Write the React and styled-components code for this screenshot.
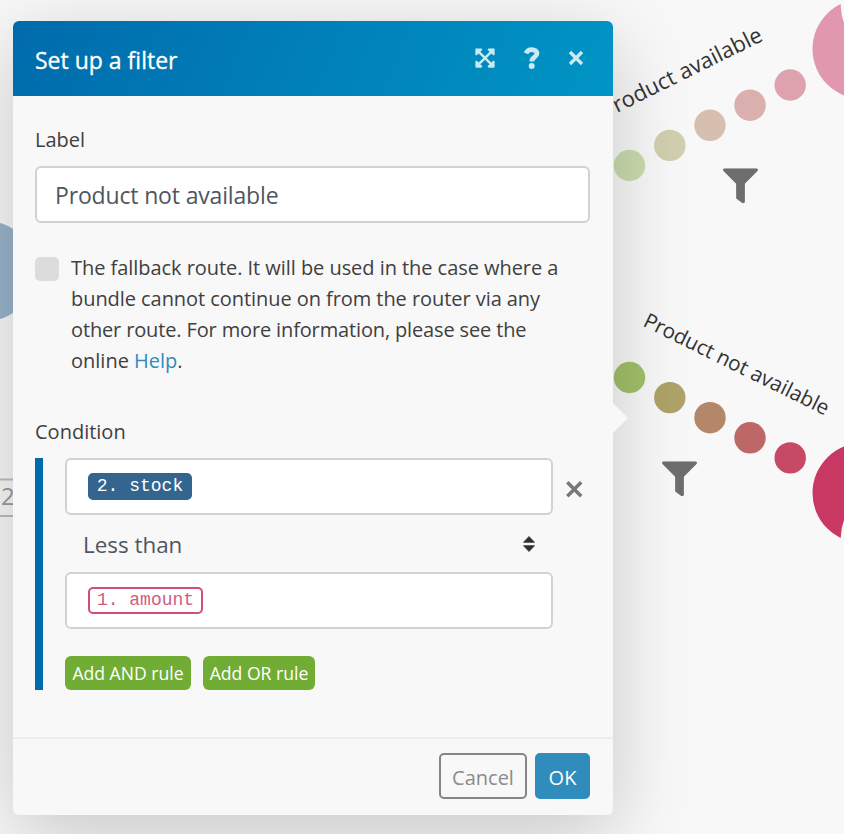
import React from "react";
import styled, { createGlobalStyle } from "styled-components";
import { FaExpandArrowsAlt } from "react-icons/fa";

const GlobalStyle = createGlobalStyle`
  * {
    box-sizing: border-box;
  }
  body {
    margin: 0;
    background: #f8f8f8;
    color: #404040;
    font-family: "Open Sans", "Noto Sans", sans-serif;
  }
`;

const Page = styled.main`
  position: relative;
  display: flow-root;
  width: 844px;
  height: 834px;
  overflow: hidden;
`;

const Canvas = styled.svg`
  position: absolute;
  inset: 0;
  width: 844px;
  height: 834px;
`;

const RouteLabel = styled.text`
  font-size: ${(p) => p.$size}px;
  fill: #333;
`;

const ModuleCount = styled.text`
  font-size: 24px;
  fill: #9a9a9a;
`;

const Dialog = styled.section`
  position: relative;
  display: flex;
  flex-direction: column;
  width: 600px;
  height: 794px;
  margin: 21px 0 0 13px;
  border-radius: 6px;
  background: #f8f8f8;
  box-shadow: 0 20px 80px rgba(0, 0, 0, 0.2);
`;

const Pointer = styled.span`
  position: absolute;
  top: 382px;
  left: 100%;
  width: 15px;
  height: 30px;
  background: #f8f8f8;
  clip-path: polygon(0 0, 100% 50%, 0 100%);
`;

const Header = styled.header`
  display: flex;
  align-items: center;
  justify-content: space-between;
  height: 75px;
  padding: 0 17px 0 22px;
  border-radius: 6px 6px 0 0;
  background: linear-gradient(115deg, #006bac, #0095c5);
`;

const Title = styled.h1`
  margin: 2px 0 0;
  color: #fff;
  font-size: 23px;
  font-weight: 400;
  line-height: 32px;
  -webkit-text-stroke: 0.3px #fff;
`;

const HeaderActions = styled.div`
  display: flex;
  align-items: center;
  padding-bottom: 1px;
`;

const IconButton = styled.button`
  display: flex;
  align-items: center;
  justify-content: center;
  width: ${(p) => p.$width}px;
  height: 30px;
  padding: 0;
  border: 0;
  background: none;
  color: #cce9f3;
`;

const RemoveButton = styled(IconButton)`
  padding: 5px 0 0 6px;
  color: #777;
`;

const Body = styled.div`
  display: flex;
  flex: 1;
  flex-direction: column;
  padding: 28px 23px 0 22px;
`;

const FieldLabel = styled.label`
  height: 30px;
  font-size: 20px;
  line-height: 31px;
`;

const TextInput = styled.div`
  display: flex;
  align-items: center;
  height: 57px;
  margin-top: 12px;
  padding: 0 18px;
  border: 2px solid #d2d2d2;
  border-radius: 6px;
  background: #fff;
  color: #4f5660;
  font-size: 23px;
  letter-spacing: -0.16px;
`;

const CheckRow = styled.div`
  display: flex;
  gap: 12px;
  margin: 29px 0 40px;
`;

const Checkbox = styled.span`
  flex: none;
  width: 24px;
  height: 24px;
  margin-top: 5px;
  border-radius: 5px;
  background: #dcdcdc;
`;

const Description = styled.p`
  margin: 0;
  font-size: 20px;
  line-height: 31px;
  white-space: nowrap;
`;

const Line = styled.span`
  display: block;
  letter-spacing: ${(p) => p.$tracking}px;
`;

const HelpLink = styled.a`
  color: #2f8cbc;
`;

const ConditionGroup = styled.div`
  display: flex;
  flex-direction: column;
  height: 232px;
  margin-top: 12px;
  padding-left: 22px;
  border-left: 8px solid #006bac;
`;

const OperandRow = styled.div`
  display: flex;
  align-items: center;
`;

const Operand = styled.div`
  flex: none;
  width: 488px;
  height: 57px;
  padding: 13px 21px;
  border: 2px solid #d2d2d2;
  border-radius: 6px;
  background: #fff;
`;

const Token = styled.span`
  display: inline-flex;
  justify-content: center;
  width: ${(p) => p.$width}px;
  height: 27px;
  border: 2px solid ${(p) => (p.$outlined ? "#cf4f77" : "#34658f")};
  border-radius: 5px;
  background: ${(p) => (p.$outlined ? "#fff" : "#34658f")};
  color: ${(p) => (p.$outlined ? "#d25b80" : "#fff")};
  font-family: "Liberation Mono", monospace;
  font-size: 18px;
  line-height: 22px;
  vertical-align: top;
  white-space: pre;
`;

const Operator = styled.div`
  display: flex;
  align-items: center;
  justify-content: space-between;
  width: 488px;
  height: 57px;
  padding: 0 18px;
  color: #4f5660;
  font-size: 22.4px;
`;

const OperatorName = styled.span`
  padding-top: 2px;
`;

const RuleActions = styled.div`
  display: flex;
  gap: 12px;
  margin-top: auto;
`;

const RuleButton = styled.button`
  width: ${(p) => p.$width}px;
  height: 34px;
  padding: 0;
  border: 0;
  border-radius: 6px;
  background: #71ad35;
  color: #fff;
  font-family: inherit;
  font-size: 17.6px;
`;

const Footer = styled.footer`
  display: flex;
  gap: 8px;
  justify-content: flex-end;
  height: 78px;
  padding: 14px 23px 0;
  border-top: 2px solid #eee;
`;

const FooterButton = styled.button`
  width: ${(p) => p.$width}px;
  height: 46px;
  padding: 3px 0 0;
  border: 2px solid ${(p) => (p.$primary ? "#2f8cbc" : "#858585")};
  border-radius: 5px;
  background: ${(p) => (p.$primary ? "#2f8cbc" : "transparent")};
  color: ${(p) => (p.$primary ? "#fff" : "#8b8b8b")};
  font-family: inherit;
  font-size: 20px;
`;

const CloseIcon = ({ size, weight }) => (
  <svg width={size} height={size} viewBox="0 0 16 16">
    <path
      d="M2 2 14 14M14 2 2 14"
      fill="none"
      stroke="currentColor"
      strokeWidth={weight}
    />
  </svg>
);

const QuestionIcon = () => (
  <svg width="16" height="22" viewBox="0 0 16 22">
    <path
      d="M2 6.400C3 3.900 5 2.600 7.700 2.600 10.800 2.600 13 4.200 13 6.600 13 10 7.800 9.800 7.800 14.600"
      fill="none"
      stroke="currentColor"
      strokeWidth="4.800"
    />
    <circle cx="7.700" cy="18.900" r="3" fill="currentColor" />
  </svg>
);

const SortIcon = () => (
  <svg width="12" height="16" viewBox="0 0 12 16">
    <path
      d="M6 .5 11.500 6.300H.5ZM6 15.500 11.500 9.700H.5Z"
      fill="#303030"
      stroke="#303030"
      strokeWidth=".8"
      strokeLinejoin="round"
    />
  </svg>
);

const FunnelIcon = ({ x, y }) => (
  <svg x={x} y={y} width="35" height="35" viewBox="0 0 512 512">
    <path
      fill="#6e6e6e"
      d="M488 0H24C2.700 0-8 25.900 7 41l185 185v206c0 7.800 3.800 15.200 10.200 19.700l80 56C298 518.700 320 507.500 320 488V226L505 41C520 25.900 509.300 0 488 0z"
    />
  </svg>
);

const availableDots = [
  [629.5, 165.5, "#cbdcae"],
  [669.8, 145.4, "#d2cfb0"],
  [710, 125.3, "#d7bfb0"],
  [750, 105.2, "#daafae"],
  [790.2, 85, "#dea2af"],
];

const unavailableDots = [
  [629.5, 377.5, "#a2c069"],
  [669.8, 397.6, "#aea46a"],
  [710, 417.7, "#b48769"],
  [750, 437.8, "#bd6767"],
  [790.2, 457.9, "#c64a66"],
];

const Dots = ({ items }) =>
  items.map(([cx, cy, fill]) => (
    <circle key={cx} cx={cx} cy={cy} r="15.700" fill={fill} />
  ));

const Scenario = () => (
  <Canvas viewBox="0 0 844 834">
    <circle cx="-14" cy="271" r="50" fill="#9ab4cb" />
    <path d="M0 479.500H20M0 516H20" stroke="#bdbdbd" strokeWidth="2" />
    <ModuleCount x="1" y="505">2</ModuleCount>

    <Dots items={availableDots} />
    <circle cx="862.500" cy="49" r="50" fill="#e198af" />
    <path d="M840.700 0V5Q841 15 844 23V0Z" fill="#f8f8f8" />
    <RouteLabel $size={22.1} transform="translate(605 118.800) rotate(-26.300)">
      Product available
    </RouteLabel>
    <FunnelIcon x="723" y="168.200" />

    <Dots items={unavailableDots} />
    <circle cx="862.500" cy="493" r="50" fill="#c83863" />
    <path d="M840.700 542V537.500Q841 528 844 520V542Z" fill="#f8f8f8" />
    <RouteLabel $size={20.7} transform="translate(642 325.500) rotate(26.200)">
      Product not available
    </RouteLabel>
    <FunnelIcon x="662" y="461.200" />
  </Canvas>
);

export default function App() {
  return (
    <Page>
      <GlobalStyle />
      <Scenario />
      <Dialog>
        <Pointer />
        <Header>
          <Title>Set up a filter</Title>
          <HeaderActions>
            <IconButton $width={47} aria-label="Expand">
              <FaExpandArrowsAlt size={22} />
            </IconButton>
            <IconButton $width={48} aria-label="Help">
              <QuestionIcon />
            </IconButton>
            <IconButton $width={40} aria-label="Close">
              <CloseIcon size={16} weight={3.3} />
            </IconButton>
          </HeaderActions>
        </Header>
        <Body>
          <FieldLabel>Label</FieldLabel>
          <TextInput>Product not available</TextInput>
          <CheckRow>
            <Checkbox />
            <Description>
              <Line $tracking={-0.05}>
                The fallback route. It will be used in the case where a
              </Line>
              <Line $tracking={-0.06}>
                bundle cannot continue on from the router via any
              </Line>
              <Line $tracking={-0.14}>
                other route. For more information, please see the
              </Line>
              <Line $tracking={0}>
                online <HelpLink>Help</HelpLink>.
              </Line>
            </Description>
          </CheckRow>
          <FieldLabel>Condition</FieldLabel>
          <ConditionGroup>
            <OperandRow>
              <Operand>
                <Token $width={104}>2. stock</Token>
              </Operand>
              <RemoveButton $width={43} aria-label="Remove rule">
                <CloseIcon size={18.5} weight={3} />
              </RemoveButton>
            </OperandRow>
            <Operator>
              <OperatorName>Less than</OperatorName>
              <SortIcon />
            </Operator>
            <Operand>
              <Token $outlined $width={115}>1. amount</Token>
            </Operand>
            <RuleActions>
              <RuleButton $width={126}>Add AND rule</RuleButton>
              <RuleButton $width={112}>Add OR rule</RuleButton>
            </RuleActions>
          </ConditionGroup>
        </Body>
        <Footer>
          <FooterButton $width={88}>Cancel</FooterButton>
          <FooterButton $width={55} $primary>
            OK
          </FooterButton>
        </Footer>
      </Dialog>
    </Page>
  );
}
